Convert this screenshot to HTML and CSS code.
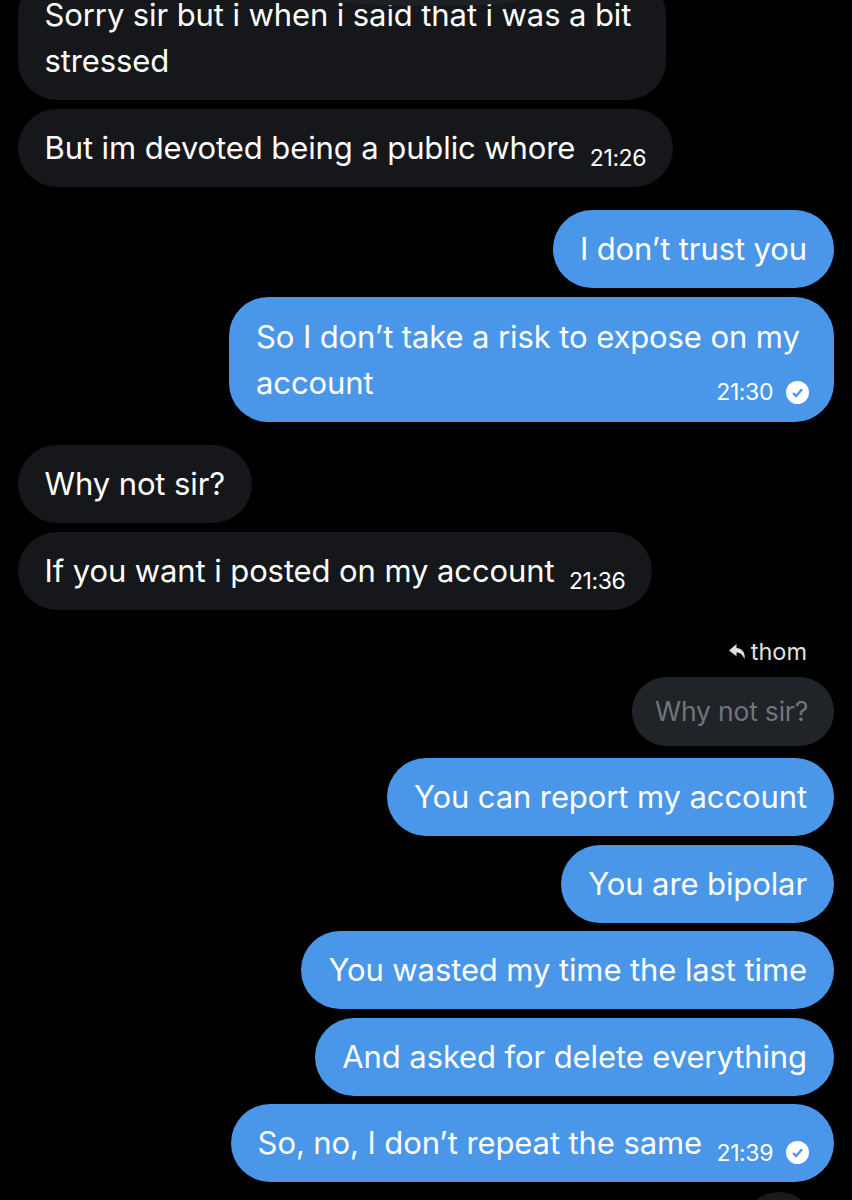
FILE: index.html
```html
<!DOCTYPE html>
<html lang="en">
<head>
    <meta charset="UTF-8">
    <meta name="viewport" content="width=device-width, initial-scale=1.0">
    <title>Messages</title>
    <link rel="stylesheet" href="styles.css">
</head>
<body>
    <div class="chat">
        <div class="group">
            <div class="bubble them wrap-first">
                Sorry sir but i when i said that i was a bit stressed
                <div class="overlap"></div>
            </div>
            <div class="bubble them">But im devoted being a public whore<span class="time">21:26</span></div>
        </div>

        <div class="group mine">
            <div class="bubble me">I don’t trust you</div>
            <div class="bubble me wrap-second">
                So I don’t take a risk to expose on my account
                <div class="meta">
                    <span class="time">21:30</span>
                    <svg class="check" viewBox="0 0 24 24"><circle cx="12" cy="12" r="12" fill="#fff"/><path d="M7.4 12.600l3.2 3.2 6-7.200" fill="none" stroke="#4a96e8" stroke-width="2.4"/></svg>
                </div>
            </div>
        </div>

        <div class="group">
            <div class="bubble them">Why not sir?</div>
            <div class="bubble them">If you want i posted on my account<span class="time">21:36</span></div>
        </div>

        <div class="group mine">
            <div class="reply-label">
                <svg class="reply-icon" viewBox="0 0 16 15"><path d="M7.500 0L0 6.500l7.500 5.700V8.500c3.500 0 6 2 8 6.500 1-6.500-2.500-10.500-8-11z" fill="#e0e0e0"/></svg>
                thom
            </div>
            <div class="bubble quoted">Why not sir?</div>
            <div class="bubble me">You can report my account</div>
            <div class="bubble me">You are bipolar</div>
            <div class="bubble me">You wasted my time the last time</div>
            <div class="bubble me">And asked for delete everything</div>
            <div class="bubble me end-row">So, no, I don’t repeat the same<span class="time">21:39</span><svg class="check" viewBox="0 0 24 24"><circle cx="12" cy="12" r="12" fill="#fff"/><path d="M7.4 12.600l3.2 3.2 6-7.200" fill="none" stroke="#4a96e8" stroke-width="2.4"/></svg></div>
            <div class="next-avatar"></div>
        </div>
    </div>
</body>
</html>
```

FILE: styles.css
```css
html, body {
    margin: 0;
    height: 1200px;
    overflow: hidden;
    background-color: #000;
}

body {
    font-family: Inter, "Liberation Sans", sans-serif;
    color: #fff;
}

.chat {
    display: flex;
    flex-direction: column;
    gap: 23.5px;
    height: 1224px;
    overflow: hidden;
    margin-top: -24px;
    padding: 0 18px;
}

.group {
    display: flex;
    flex-direction: column;
    align-items: flex-start;
    gap: 8.5px;
}

.group.mine {
    align-items: flex-end;
}

.bubble {
    box-sizing: border-box;
    position: relative;
    flex-shrink: 0;
    padding: 16px 27px;
    border-radius: 39px;
    font-size: 31px;
    line-height: 46px;
    letter-spacing: -0.1px;
}

.them {
    padding-left: 26.5px;
    background-color: #16171a;
}

.me {
    background-color: #4a96e8;
}

.wrap-first {
    width: 648px;
}

.wrap-second {
    width: 605px;
    padding-top: 17px;
}

.overlap {
    position: absolute;
    top: 0;
    left: 320px;
    width: 180px;
    height: 30px;
    border-radius: 0 0 90px 90px / 0 0 6px 6px;
    background-color: #1f2023;
}

.quoted {
    margin-bottom: 4px;
    padding: 16px 26px 16px 23px;
    background-color: #202327;
    color: #6e767d;
    font-size: 26.5px;
    line-height: 37px;
    letter-spacing: -0.2px;
}

.time {
    font-size: 23px;
    line-height: 0;
    letter-spacing: -0.4px;
    margin-left: 14.5px;
    vertical-align: -7px;
}

.meta {
    float: right;
    display: flex;
    align-items: center;
    height: 23px;
    margin: 21px -2px 0 0;
}

.meta .time {
    vertical-align: baseline;
}

.check {
    width: 23px;
    height: 23px;
    margin-left: 13px;
    margin-right: -2px;
    vertical-align: -10px;
}

.meta .check {
    margin-right: 0;
}

.reply-label {
    display: flex;
    align-items: center;
    gap: 6px;
    margin: 4px 0 2px;
    padding-right: 27px;
    font-size: 23.5px;
    color: #e0e0e0;
}

.reply-icon {
    width: 16px;
    height: 15px;
}

.next-avatar {
    flex-shrink: 0;
    width: 72px;
    height: 72px;
    margin: 1px 19px 0 0;
    border-radius: 50%;
    background-color: #1a1b1e;
}
```
